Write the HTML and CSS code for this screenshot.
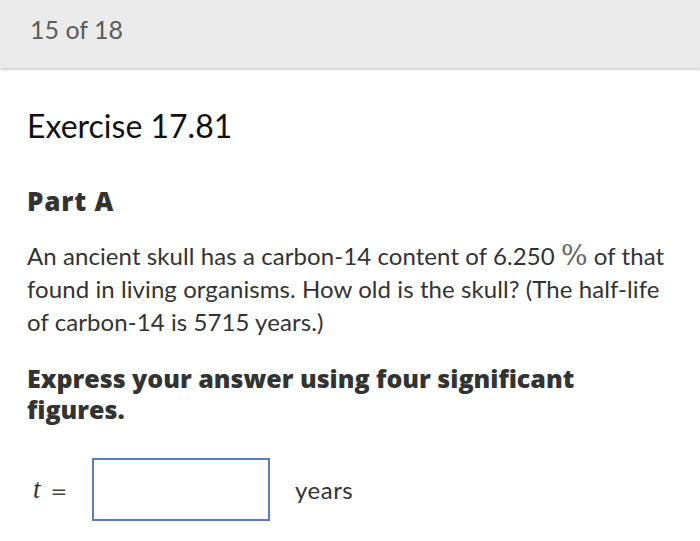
FILE: index.html
```html
<!DOCTYPE html>
<html>
<head>
<meta charset="utf-8">
<link rel="stylesheet" href="styles.css">
</head>
<body>
<header class="topbar"><span class="count">15 of 18</span></header>
<main class="content">
  <h1 class="title">Exercise 17.81</h1>
  <h2 class="part">Part A</h2>
  <p class="question">An ancient skull has a carbon-14 content of 6.250 <span class="pct">%</span> of that found in living organisms. How old is the skull? (The half-life of carbon-14 is 5715 years.)</p>
  <p class="instr">Express your answer using four significant figures.</p>
  <div class="answer">
    <span class="var"><i>t</i><span class="eq">=</span></span>
    <input class="box" type="text">
    <span class="unit">years</span>
  </div>
</main>
</body>
</html>
```
FILE: styles.css
```css
html, body { margin: 0; padding: 0; background: #fff; }
body { font-family: Lato, "Open Sans", sans-serif; color: #333; width: 700px; }
.topbar {
  height: 68px;
  background: #ebebeb;
  box-shadow: 0 2px 2px rgba(0,0,0,0.18);
  box-sizing: border-box;
  padding: 13px 0 0 30px;
}
.count { font-size: 25px; line-height: 32px; letter-spacing: 0; color: #5c5c5c; display: block; }
.content { padding: 0 20px 0 27px; }
.title { font-weight: 400; font-size: 32px; color: #111; margin: 38px 0 0; line-height: 40px; }
.part { font-family: "Open Sans", sans-serif; font-weight: 800; font-size: 26px; letter-spacing: 0.8px; margin: 40px 0 0; line-height: 30px; color: #333; }
.question { font-size: 24px; line-height: 33px; letter-spacing: 0.08px; margin: 23px 0 0; color: #333; }
.pct { font-family: "DejaVu Serif", serif; color: #666; font-size: 28px; letter-spacing: 0; line-height: 20px; }
.instr { font-family: "Open Sans", sans-serif; font-weight: 800; font-size: 25px; line-height: 31px; margin: 25px 0 0; color: #333; max-width: 640px; }
.answer { display: flex; align-items: center; margin-top: 33px; }
.var { font-family: "Liberation Serif", serif; font-size: 22px; color: #333; margin-left: 6px; width: 59px; display: flex; align-items: baseline; }
.var i { font-size: 27px; }
.eq { margin-left: 10px; font-family: "DejaVu Sans", sans-serif; font-size: 20px; color: #444; }
.box { width: 178px; height: 63px; box-sizing: border-box; border: 2px solid #5a7fb8; border-radius: 0; padding: 0; margin: 0; outline: none; background: #fff; }
.unit { font-size: 24px; letter-spacing: 0.5px; margin-left: 25px; color: #333; }
```
